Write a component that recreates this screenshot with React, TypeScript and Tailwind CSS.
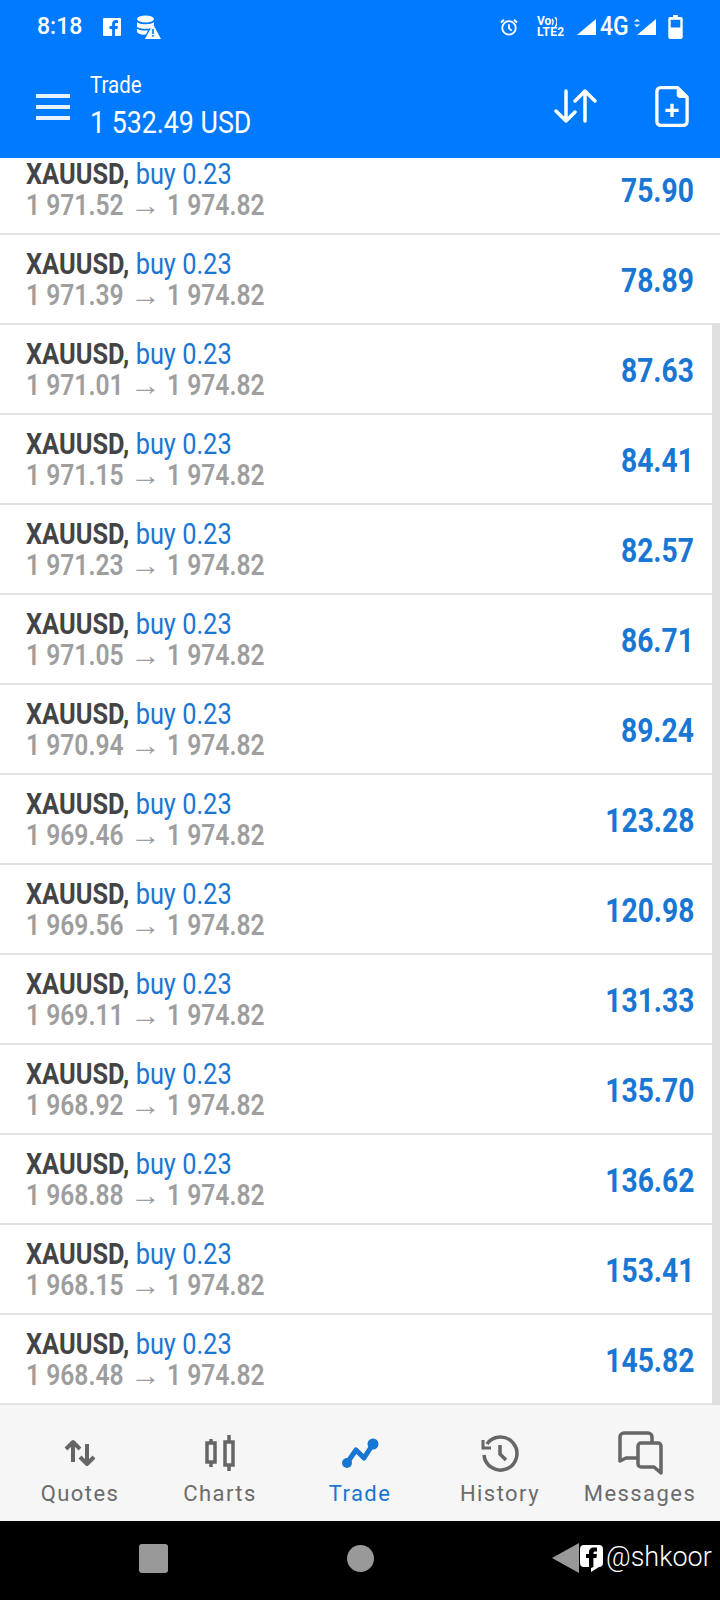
const rows = [
  ["1 971.52", "75.90"],
  ["1 971.39", "78.89"],
  ["1 971.01", "87.63"],
  ["1 971.15", "84.41"],
  ["1 971.23", "82.57"],
  ["1 971.05", "86.71"],
  ["1 970.94", "89.24"],
  ["1 969.46", "123.28"],
  ["1 969.56", "120.98"],
  ["1 969.11", "131.33"],
  ["1 968.92", "135.70"],
  ["1 968.88", "136.62"],
  ["1 968.15", "153.41"],
  ["1 968.48", "145.82"],
];

const StatusBar = () => (
  <div className="flex items-center h-[54px] pl-[37px] pr-[37px] text-white">
    <span className="text-[23px] font-medium w-[44px] whitespace-nowrap">8:18</span>
    <svg className="ml-[22px]" width="18" height="18" viewBox="0 0 18 18">
      <path fill="#fff" d="M1 0h16a1 1 0 0 1 1 1v16a1 1 0 0 1-1 1h-5v-7h2.500l.4-3H12V6.300c0-.9.300-1.400 1.500-1.400H15V2.200C14.600 2.100 13.800 2 13 2c-2.300 0-3.900 1.400-3.900 3.900V8H6.500v3h2.600v7H1a1 1 0 0 1-1-1V1a1 1 0 0 1 1-1z" />
    </svg>
    <svg className="ml-[15px]" width="25" height="24" viewBox="0 0 25 24">
      <ellipse cx="9.500" cy="4" rx="8.500" ry="3.500" fill="#fff" />
      <path fill="#fff" d="M1 7c2 3 15 3 17 0v2.500L15 13c-4 1.500-12 1-14-1.500zM1 13.500c2 2 7 2.500 11 1.800L10 19.500c-4 .5-8-.5-9-2.500z" />
      <path fill="#fff" d="M17 9l8 15H9z" />
      <rect x="16.200" y="14" width="1.600" height="5" fill="#007aff" />
      <rect x="16.200" y="20" width="1.600" height="1.800" fill="#007aff" />
    </svg>
    <div className="flex-1" />
    <svg width="18" height="18" viewBox="0 0 20 20" fill="none" stroke="#fff" strokeWidth="2">
      <circle cx="10" cy="11" r="7.500" />
      <path d="M10 7v4.500l3 2.500M1 5l3.500-3M19 5l-3.500-3" />
    </svg>
    <div className="ml-[19px] w-[26px] font-bold">
      <div className="flex items-center h-[11px] text-[12px] leading-[11px]">
        Vo
        <svg width="6" height="10" viewBox="0 0 6 10" fill="none" stroke="#fff" strokeWidth="1.300">
          <path d="M1 2c1.500 2 1.500 4 0 6M4 0c2.500 3 2.500 7 0 10" />
        </svg>
      </div>
      <div className="text-[12px] leading-[11px] tracking-[0.3px] whitespace-nowrap">LTE2</div>
    </div>
    <svg className="ml-[14px]" width="19" height="16" viewBox="0 0 19 16">
      <path fill="#fff" d="M19 0v16H0z" />
    </svg>
    <span className="ml-[4px] text-[25px] leading-[24px] font-medium inline-block w-[27px] origin-left scale-x-[0.92] whitespace-nowrap">4G</span>
    <svg className="ml-[7px]" width="22" height="16" viewBox="0 0 22 16">
      <path fill="#fff" d="M22 0v16H3zM0 2.500h6L3 0zM0 5.500h6L3 8z" />
    </svg>
    <svg className="ml-[12px]" width="15" height="24" viewBox="0 0 15 25">
      <path fill="#fff" d="M5 0h5v2h3a2 2 0 0 1 2 2v19a2 2 0 0 1-2 2H2a2 2 0 0 1-2-2V4a2 2 0 0 1 2-2h3z" />
      <rect x="2.500" y="5" width="10" height="8" fill="#007aff" />
    </svg>
  </div>
);

const AppBar = () => (
  <div className="flex items-center h-[104px] pl-[36px] pr-[31px] text-white">
    <div className="flex flex-col gap-[7px] w-[34px] mt-[1px]">
      <div className="h-[4px] bg-[#e6f2ff]" />
      <div className="h-[4px] bg-[#e6f2ff]" />
      <div className="h-[4px] bg-[#e6f2ff]" />
    </div>
    <div className="ml-[20px] mt-[3px] flex flex-col">
      <span className="text-[23px] leading-[28px] origin-left scale-x-[0.89] whitespace-nowrap">Trade</span>
      <span className="mt-[3px] text-[31px] leading-[40px] origin-left scale-x-[0.863] whitespace-nowrap">1 532.49 USD</span>
    </div>
    <div className="flex-1" />
    <svg width="44" height="36" viewBox="0 0 44 36" fill="none" stroke="#fff" strokeWidth="3.500" strokeLinecap="round" strokeLinejoin="round">
      <path d="M13 3v30M3 23l10 10 9-9M32 33V3M22 13L32 3l10 10" />
    </svg>
    <svg className="ml-[58px]" width="34" height="43" viewBox="0 0 36 44" fill="none">
      <path d="M7 2h17l10 10v26a4 4 0 0 1-4 4H6a4 4 0 0 1-4-4V6a4 4 0 0 1 4-4z" stroke="#fff" strokeWidth="3.500" strokeLinejoin="round" />
      <path d="M23 2v7a4 4 0 0 0 4 4h7z" fill="#fff" />
      <path d="M18 19v14M11 26h14" stroke="#fff" strokeWidth="3.500" />
    </svg>
  </div>
);

const Row = ({ open, profit, first }: { open: string; profit: string; first?: boolean }) => (
  <div className={`${first ? "h-[77px] pt-0" : "h-[90px] pt-[13px]"} flex justify-between border-b-2 border-[#e3e3e3] px-[26px] overflow-hidden`}>
    <div className="flex flex-col whitespace-nowrap">
      <div className="text-[29px] leading-[32px] origin-left scale-x-[0.875]">
        <span className="font-bold text-[#444444]">XAUUSD, </span>
        <span className="text-[#1976d2]">buy 0.23</span>
      </div>
      <div className="text-[29px] leading-[31px] font-semibold text-[#9e9e9e] origin-left scale-x-[0.85]">
        {open}
        <span className="inline-block w-[51px] text-center font-normal scale-x-[1.25]">→</span>
        1 974.82
      </div>
    </div>
    <div className={`self-center text-[34px] font-bold text-[#1976d2] origin-right scale-x-[0.83] ${first ? "mb-[10px]" : "mb-[11px]"}`}>{profit}</div>
  </div>
);

const NavItem = ({ label, active, children }: { label: string; active?: boolean; children: React.ReactNode }) => (
  <div className="flex-1 flex flex-col items-center">
    <div className="h-[56px] flex items-center justify-center">{children}</div>
    <span className={`text-[22px] leading-[26px] tracking-[1.45px] ${active ? "text-[#1976d2]" : "text-[#6b6b6b]"}`}>{label}</span>
  </div>
);

export default function App() {
  return (
    <div className="w-[720px] h-[1600px] flex flex-col bg-white font-['Roboto',sans-serif] overflow-hidden">
      <div className="bg-[#007aff] shrink-0">
        <StatusBar />
        <AppBar />
      </div>
      <div className="flex-1 relative overflow-hidden">
        {rows.map((r, i) => (
          <Row key={i} open={r[0]} profit={r[1]} first={i === 0} />
        ))}
        <div className="absolute right-0 top-[166px] bottom-0 w-[8px] bg-[#e0e0e0]" />
      </div>
      <div className="h-[116px] shrink-0 flex items-start px-[10px] pt-[20px] bg-[#f6f6f6]">
        <NavItem label="Quotes">
          <svg width="32" height="28" viewBox="0 0 32 28" fill="none" stroke="#666" strokeWidth="4" strokeLinejoin="round">
            <path d="M9 23V3M2 10l7-7 7 7M23 5v20M16 18l7 7 7-7" />
          </svg>
        </NavItem>
        <NavItem label="Charts">
          <svg width="30" height="36" viewBox="0 0 30 36" fill="none" stroke="#666" strokeWidth="3.500">
            <rect x="2" y="8" width="8" height="19" />
            <rect x="20" y="7" width="8" height="23" />
            <path d="M6 4v4M6 27v5M24 0v7M24 30v6" />
          </svg>
        </NavItem>
        <NavItem label="Trade" active>
          <svg width="37" height="31" viewBox="0 0 37 31" fill="none" stroke="#1976d2" strokeWidth="5" strokeLinejoin="round">
            <path d="M5 25l9-13 8 8 9-14" />
            <circle cx="5" cy="25" r="5" fill="#1976d2" stroke="none" />
            <circle cx="31" cy="6" r="5.500" fill="#1976d2" stroke="none" />
          </svg>
        </NavItem>
        <NavItem label="History">
          <svg width="38" height="38" viewBox="0 0 38 38" fill="none" stroke="#666" strokeWidth="3.500">
            <path d="M6 10a16.500 16.500 0 1 1-3 11" />
            <path d="M2 6v8h8" strokeWidth="3" />
            <path d="M19 11v9l6 6" />
          </svg>
        </NavItem>
        <NavItem label="Messages">
          <svg width="46" height="44" viewBox="0 0 46 44" fill="none" stroke="#666" strokeWidth="3.500" strokeLinejoin="round">
            <path d="M20 27H9l-6 3V6a4 4 0 0 1 4-4h24a4 4 0 0 1 4 4v5" />
            <path d="M24 12h17a3 3 0 0 1 3 3v27l-7-6H24a3 3 0 0 1-3-3V15a3 3 0 0 1 3-3z" />
          </svg>
        </NavItem>
      </div>
      <div className="h-[79px] shrink-0 bg-black flex items-center relative">
        <div className="ml-[139px] mb-[5px] w-[29px] h-[29px] rounded-[3px] bg-[#999999]" />
        <div className="ml-[179px] mb-[5px] w-[27px] h-[27px] rounded-full bg-[#999999]" />
        <div className="ml-[178px] mb-[5px] w-0 h-0 border-y-[15px] border-y-transparent border-r-[27px] border-r-[#999999]" />
        <svg className="mb-[5px]" width="25" height="28" viewBox="0 0 25 28">
          <path fill="#fff" d="M5 1h15a4 4 0 0 1 4 4v14a4 4 0 0 1-4 4l-8 5v-5H5a4 4 0 0 1-4-4V5a4 4 0 0 1 4-4z" />
          <path fill="#000" d="M10 25V14H7v-4h3V8c0-3 2-4.500 4.500-4.500H18v4h-2c-1 0-1.500.5-1.500 1.500v1H18l-.6 4h-3v9z" />
        </svg>
        <span className="ml-[2px] mb-[7px] text-[27px] font-light text-white whitespace-nowrap">@shkoor</span>
      </div>
    </div>
  );
}
